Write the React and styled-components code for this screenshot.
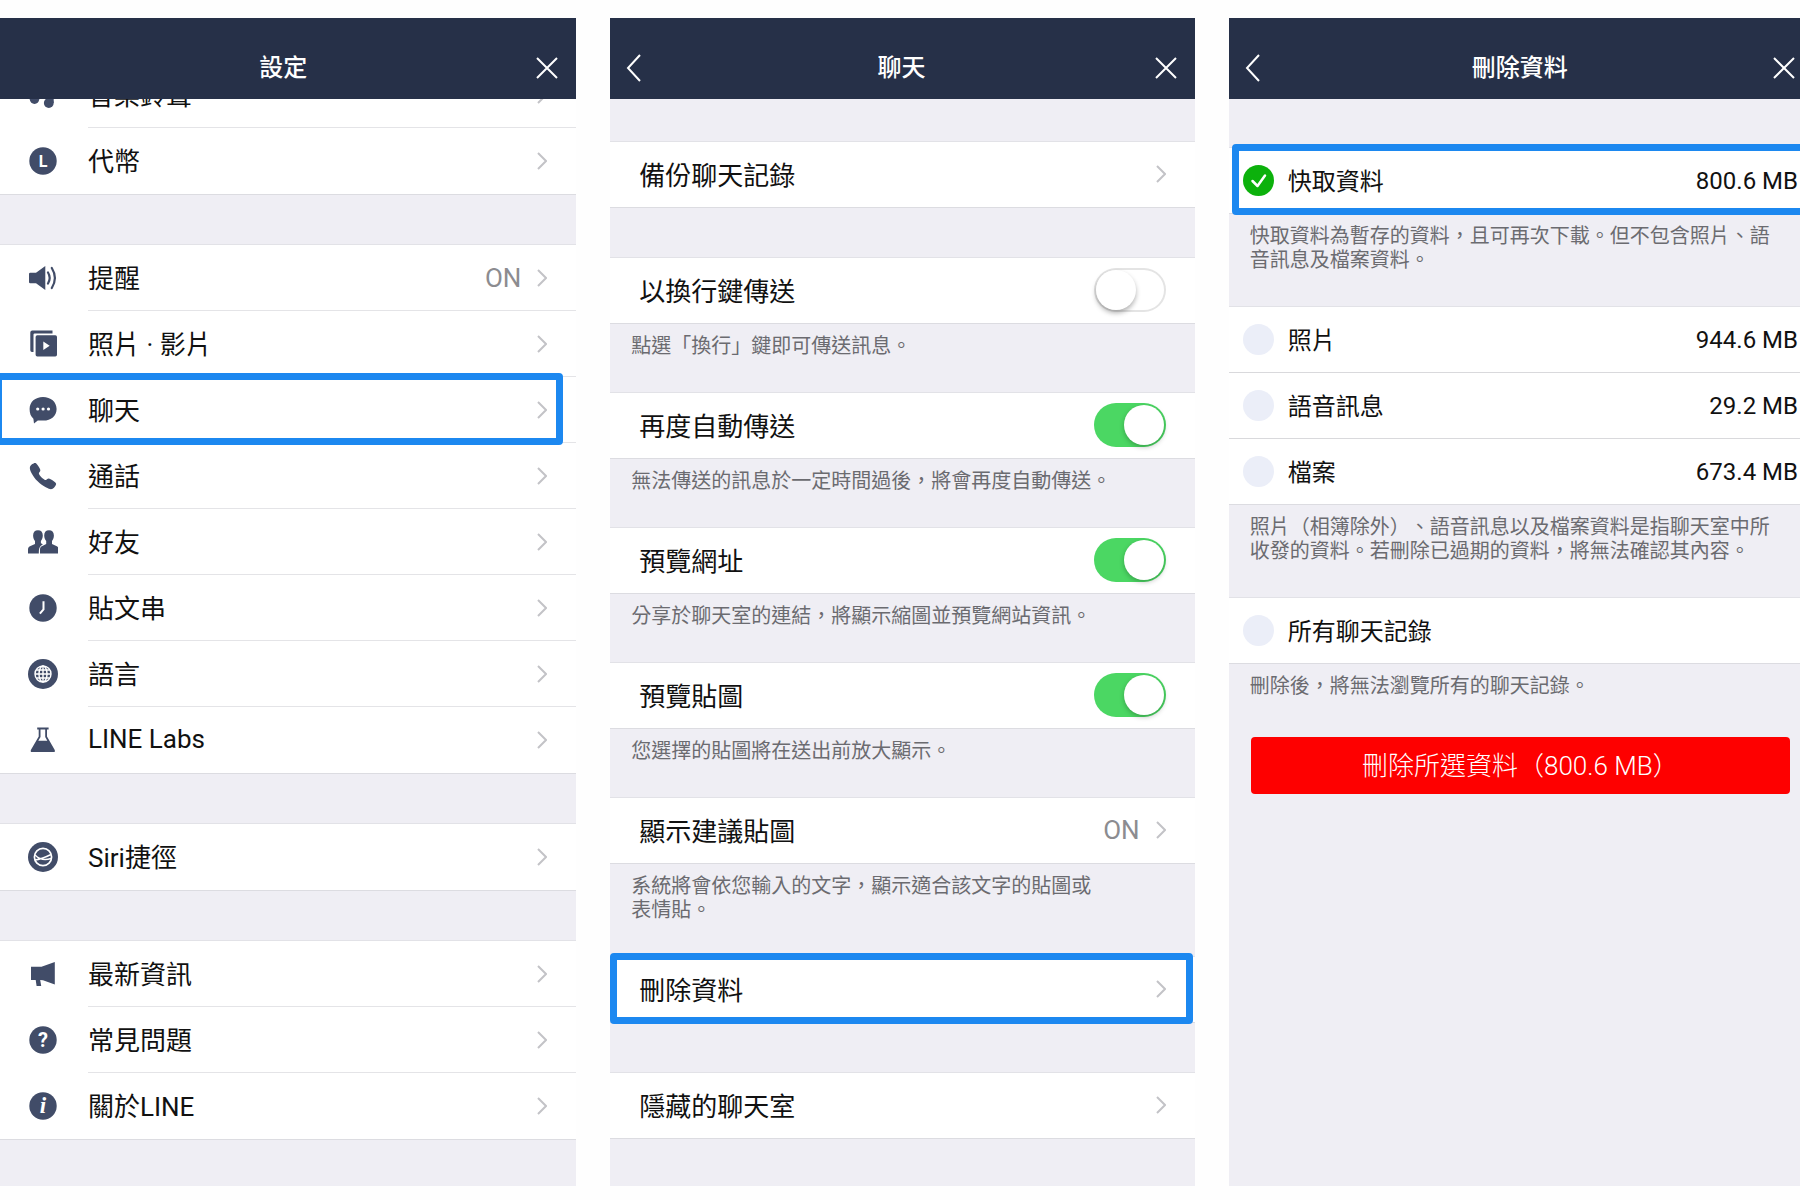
import React from "react";
import styled, { createGlobalStyle } from "styled-components";
import { IoCall } from "react-icons/io5";

const GlobalStyle = createGlobalStyle`
  * {
    box-sizing: border-box;
  }

  body {
    margin: 0;
    background: #fefefe;
    color: #111;
    font-family: Roboto, "Noto Sans CJK TC", sans-serif;
    font-size: 26px;
    text-spacing-trim: space-all;
  }
`;

const Page = styled.main`
  overflow: hidden;
  padding: 18px 0 14px;
`;

const Screens = styled.div`
  display: grid;
  grid-template-columns: repeat(3, minmax(0, 1fr));
  gap: 34px;
  margin: 0 -13px 0 -8px;
`;

const Screen = styled.section`
  display: flex;
  flex-direction: column;
  background: #efeef4;
`;

const Header = styled.header`
  position: relative;
  z-index: 1;
  display: grid;
  grid-template-columns: 1fr auto 1fr;
  align-items: center;
  height: 81px;
  padding: 19px 18px 0 16px;
  background: #263048;
  color: white;
`;

const Title = styled.h1`
  grid-column: 2;
  margin: 0;
  font-size: 24px;
  font-weight: 500;
  line-height: 36px;
`;

const HeaderButton = styled.button`
  grid-column: ${(props) => (props.$side === "left" ? 1 : 3)};
  justify-self: ${(props) => (props.$side === "left" ? "start" : "end")};
  display: flex;
  border: 0;
  padding: 0;
  background: none;
  color: inherit;
`;

const Content = styled.div`
  padding-top: ${(props) => props.$top || 0}px;
  padding-bottom: 47px;
`;

const ScrolledContent = styled(Content)`
  margin-top: -37px;
`;

const Group = styled.div`
  margin-top: ${(props) => props.$space || 0}px;
  background: white;
  box-shadow: 0 -1px 0 #e2e2e7, 0 1px 0 #dcdce1;
`;

const Row = styled.div`
  position: relative;
  display: flex;
  align-items: center;
  height: ${(props) => (props.$tall ? 66 : 65)}px;
  padding-left: ${(props) => (props.$tall ? 36 : 29)}px;
  color: inherit;
  text-decoration: none;
`;

const RowBody = styled.div`
  flex: 1;
  display: flex;
  align-items: center;
  gap: 16px;
  height: 100%;
  padding-right: 29px;
  border-bottom: 1px solid transparent;

  ${Row}:not(:last-child) > & {
    border-color: #e4e4e7;
  }
`;

const RowLabel = styled.span`
  flex: 1;
  padding-bottom: 2px;
  white-space: nowrap;
`;

const RowValue = styled.span`
  color: #8c8c90;
`;

const IconBox = styled.span`
  display: flex;
  align-items: center;
  justify-content: center;
  width: 30px;
  margin-right: 30px;
  color: #414c68;
`;

const Highlight = styled.span`
  position: absolute;
  top: -4px;
  bottom: -2px;
  left: ${(props) => props.$left}px;
  right: ${(props) => props.$right}px;
  z-index: 1;
  border: 7px solid #1c88f0;
  border-radius: 4px;
  pointer-events: none;
`;

const Note = styled.p`
  margin: 0;
  padding: 11px 28px 35px 21px;
  color: #6b6b70;
  font-size: 20px;
  line-height: 24px;
`;

const Switch = styled.input`
  appearance: none;
  flex: none;
  width: 72px;
  height: 44px;
  margin: 0;
  padding: 2px;
  border-radius: 22px;
  background: white;
  box-shadow: inset 0 0 0 2px #e4e4e4;

  &::before {
    content: "";
    display: block;
    width: 40px;
    height: 40px;
    border-radius: 50%;
    background: white;
    box-shadow: 0 3px 5px rgba(0, 0, 0, 0.3);
  }

  &:checked {
    background: #4bd763;
    box-shadow: none;
  }

  &:checked::before {
    margin-left: 28px;
    box-shadow: 0 2px 5px rgba(0, 0, 0, 0.25);
  }
`;

const CheckRow = styled.label`
  position: relative;
  display: flex;
  align-items: center;
  gap: 14px;
  height: 65px;
  padding: 0 15px 0 14px;
  font-size: 24px;

  &:not(:last-child) {
    height: 66px;
    border-bottom: 1px solid #d9d9dc;
  }
`;

const CheckMark = styled.span`
  position: relative;
  display: flex;
  width: 31px;
  height: 31px;

  svg {
    position: absolute;
    inset: 0;
    pointer-events: none;
  }
`;

const CheckInput = styled.input`
  appearance: none;
  width: 31px;
  height: 31px;
  margin: 0;
  border-radius: 50%;
  background: #ebeef8;

  &:checked {
    background: #0cb10c;
  }
`;

const DeleteButton = styled.button`
  display: block;
  width: calc(100% - 45px);
  height: 57px;
  margin: 4px 23px 0 22px;
  padding: 0 0 5px;
  border: 0;
  border-radius: 4px;
  background: #fe0000;
  color: white;
  font-family: inherit;
  font-size: 26px;
  font-weight: 300;
`;

const CloseIcon = () => (
  <svg width="22" height="22" viewBox="0 0 22 22" stroke="currentColor" strokeWidth="2">
    <path d="M1 1l20 20M21 1L1 21" />
  </svg>
);

const BackIcon = () => (
  <svg width="15" height="28" viewBox="0 0 15 28" fill="none" stroke="currentColor" strokeWidth="2">
    <path d="M14 1L2 14l12 13" />
  </svg>
);

const Chevron = () => (
  <svg width="10" height="18" viewBox="0 0 10 18" fill="none" stroke="#c3c3c7" strokeWidth="2">
    <path d="M1 1l8 8-8 8" />
  </svg>
);

const Icon = ({ children }) => (
  <svg width="30" height="30" viewBox="0 0 30 30" fill="currentColor">
    {children}
  </svg>
);

const LetterIcon = ({ letter, ...rest }) => (
  <Icon>
    <circle cx="15" cy="15" r="13.7" />
    <text x="15" y="20.5" textAnchor="middle" fill="white" fontWeight="700" fontSize="16" {...rest}>
      {letter}
    </text>
  </Icon>
);

const icons = {
  music: (
    <Icon>
      <circle cx="6.5" cy="19.3" r="4.7" />
      <circle cx="20.8" cy="23" r="4.9" />
      <path d="M8.5 3l17.2 3v17h-3V11L11.2 9v10h-2.7z" />
    </Icon>
  ),
  coin: <LetterIcon letter="L" />,
  speaker: (
    <Icon>
      <path d="M2.2 9.8H8L17.3 3v24L8 20.2H2.2q-1.2 0-1.2-1.2v-8q0-1.2 1.2-1.2z" />
      <path
        d="M20 9.5q3.4 5.5 0 11M23.8 5q6.2 10 0 20"
        fill="none"
        stroke="currentColor"
        strokeWidth="2.2"
        strokeLinecap="round"
      />
    </Icon>
  ),
  photos: (
    <Icon>
      <path d="M4.3 1.5H24.5v3H6.6q-1.1 0-1.1 1.1V23H4q-1.7 0-1.7-1.7V3.5q0-2 2-2z" />
      <path
        fillRule="evenodd"
        d="M9.3 6.2h18q1.7 0 1.7 1.7v17.9q0 1.7-1.7 1.7h-18q-1.7 0-1.7-1.7V7.9q0-1.7 1.7-1.7zM15.3 12.5v8.6l6.4-4.3z"
      />
    </Icon>
  ),
  chat: (
    <Icon>
      <path d="M15 2C22.8 2 28.6 6.9 28.6 14S23 25.6 15.4 25.6H9.8L6 28.4l-.6-4.6C2.8 21.4 1.6 18.4 1.6 14 1.6 6.9 7.2 2 15 2z" />
      <g fill="white">
        <circle cx="9.7" cy="14" r="1.6" />
        <circle cx="15.1" cy="14" r="1.6" />
        <circle cx="20.5" cy="14" r="1.6" />
      </g>
    </Icon>
  ),
  call: <IoCall size={30} />,
  friends: (
    <Icon>
      <path d="M10 3.3c3 0 4.8 1.9 4.8 5.1 0 2.6-1 4.4-1.9 5.6v2.2l2 1-2 1.6c-1.6 1.2-2.1 3.6-2.1 7.7H0v-4c0-1.8 1-2.8 2.5-3.5L7 17v-3c-1-1.2-1.9-3-1.9-5.6 0-3.2 1.9-5.1 4.9-5.1z" />
      <path d="M21 3.3c3 0 4.9 1.9 4.9 5.1 0 2.6-1 4.4-1.9 5.6v3l4.3 2c1.5.7 2.4 1.7 2.4 3.5v4H12v-4c0-1.8.8-2.8 2.3-3.5l3.9-2v-3c-1-1.2-2-3-2-5.6 0-3.2 1.8-5.1 4.8-5.1z" />
    </Icon>
  ),
  clock: (
    <Icon>
      <circle cx="15" cy="15" r="13.7" />
      <path d="M15.5 8.3v8.2l-3.6 4.2" fill="none" stroke="white" strokeWidth="2" />
    </Icon>
  ),
  globe: (
    <Icon>
      <circle cx="15" cy="15" r="15" />
      <g fill="none" stroke="white" strokeWidth="1.4">
        <circle cx="15" cy="15" r="8" />
        <ellipse cx="15" cy="15" rx="4" ry="8" />
        <path d="M15 7v16M7 15h16M8.3 11h13.4M8.3 19h13.4" />
      </g>
    </Icon>
  ),
  flask: (
    <Icon>
      <path
        fillRule="evenodd"
        d="M9.2 2.5h11.4v2h-1.6v7l7.6 13.2q1 2.3-1 2.3H4q-2 0-1-2.3L10.7 11.5v-7H9.2zM12.5 4.5v7.5l-2.2 3.8h9L17.2 12V4.5z"
      />
    </Icon>
  ),
  siri: (
    <Icon>
      <circle cx="15" cy="15" r="15" />
      <g fill="none" stroke="white" strokeWidth="1.7">
        <circle cx="15" cy="15" r="8.6" />
        <path d="M7 13c4 4 10 5.5 16 3.5M7 18c5-.5 10-2.5 16-5.5" strokeWidth="1.4" />
      </g>
    </Icon>
  ),
  news: (
    <Icon>
      <path d="M3 7.8h10.5L26.8 3v22.5L15 21.3l-2.8-.3 1 6H8.6L7.7 21H3z" />
    </Icon>
  ),
  help: <LetterIcon letter="?" fontSize="20" y="22" />,
  info: (
    <LetterIcon
      letter="i"
      fontFamily="Liberation Serif, serif"
      fontStyle="italic"
      fontSize="23"
      y="22"
    />
  ),
};

const settings = [
  [
    { icon: "music", label: "音樂鈴聲" },
    { icon: "coin", label: "代幣" },
  ],
  [
    { icon: "speaker", label: "提醒", value: "ON" },
    { icon: "photos", label: "照片 · 影片" },
    { icon: "chat", label: "聊天", highlighted: true },
    { icon: "call", label: "通話" },
    { icon: "friends", label: "好友" },
    { icon: "clock", label: "貼文串" },
    { icon: "globe", label: "語言" },
    { icon: "flask", label: "LINE Labs" },
  ],
  [{ icon: "siri", label: "Siri捷徑" }],
  [
    { icon: "news", label: "最新資訊" },
    { icon: "help", label: "常見問題" },
    { icon: "info", label: "關於LINE" },
  ],
];

const chatSwitches = [
  { label: "以換行鍵傳送", note: "點選「換行」鍵即可傳送訊息。", on: false, space: 51 },
  { label: "再度自動傳送", note: "無法傳送的訊息於一定時間過後，將會再度自動傳送。", on: true },
  { label: "預覽網址", note: "分享於聊天室的連結，將顯示縮圖並預覽網站資訊。", on: true },
  { label: "預覽貼圖", note: "您選擇的貼圖將在送出前放大顯示。", on: true },
];

const dataTypes = [
  { label: "照片", size: "944.6 MB" },
  { label: "語音訊息", size: "29.2 MB" },
  { label: "檔案", size: "673.4 MB" },
];

const ScreenHeader = ({ title, back }) => (
  <Header>
    {back && (
      <HeaderButton $side="left" aria-label="返回">
        <BackIcon />
      </HeaderButton>
    )}
    <Title>{title}</Title>
    <HeaderButton $side="right" aria-label="關閉">
      <CloseIcon />
    </HeaderButton>
  </Header>
);

const LinkRow = ({ icon, label, value, children }) => (
  <Row as="a" href="#" $tall={Boolean(icon)}>
    {icon && <IconBox>{icons[icon]}</IconBox>}
    <RowBody>
      <RowLabel>{label}</RowLabel>
      {value && <RowValue>{value}</RowValue>}
      <Chevron />
    </RowBody>
    {children}
  </Row>
);

const DataRow = ({ label, size, checked, children }) => (
  <CheckRow>
    <CheckMark>
      <CheckInput type="checkbox" defaultChecked={checked} />
      {checked && (
        <svg viewBox="0 0 31 31" fill="none" stroke="white" strokeWidth="2.5">
          <path d="M9.5 16l5 5 7.5-10.5" strokeLinecap="round" strokeLinejoin="round" />
        </svg>
      )}
    </CheckMark>
    <RowLabel>{label}</RowLabel>
    {size && <span>{size}</span>}
    {children}
  </CheckRow>
);

const SettingsScreen = () => (
  <Screen>
    <ScreenHeader title="設定" />
    <ScrolledContent>
      {settings.map((rows, index) => (
        <Group key={index} $space={index === 0 ? 0 : 51}>
          {rows.map(({ highlighted, ...row }) => (
            <LinkRow key={row.label} {...row}>
              {highlighted && <Highlight $left={3} $right={13} />}
            </LinkRow>
          ))}
        </Group>
      ))}
    </ScrolledContent>
  </Screen>
);

const ChatScreen = () => (
  <Screen>
    <ScreenHeader title="聊天" back />
    <Content $top={43}>
      <Group>
        <LinkRow label="備份聊天記錄" />
      </Group>
      {chatSwitches.map(({ label, note, on, space }) => (
        <React.Fragment key={label}>
          <Group $space={space}>
            <Row as="label">
              <RowBody>
                <RowLabel>{label}</RowLabel>
                <Switch type="checkbox" role="switch" defaultChecked={on} />
              </RowBody>
            </Row>
          </Group>
          <Note>{note}</Note>
        </React.Fragment>
      ))}
      <Group>
        <LinkRow label="顯示建議貼圖" value="ON" />
      </Group>
      <Note>
        系統將會依您輸入的文字，顯示適合該文字的貼圖或
        <br />
        表情貼。
      </Note>
      <Group>
        <LinkRow label="刪除資料">
          <Highlight $left={0} $right={2} />
        </LinkRow>
      </Group>
      <Group $space={51}>
        <LinkRow label="隱藏的聊天室" />
      </Group>
    </Content>
  </Screen>
);

const DeleteScreen = () => (
  <Screen>
    <ScreenHeader title="刪除資料" back />
    <Content $top={49}>
      <Group>
        <DataRow label="快取資料" size="800.6 MB" checked>
          <Highlight $left={3} $right={0} />
        </DataRow>
      </Group>
      <Note>快取資料為暫存的資料，且可再次下載。但不包含照片、語音訊息及檔案資料。</Note>
      <Group>
        {dataTypes.map((type) => (
          <DataRow key={type.label} {...type} />
        ))}
      </Group>
      <Note>
        照片（相簿除外）、語音訊息以及檔案資料是指聊天室中所收發的資料。若刪除已過期的資料，將無法確認其內容。
      </Note>
      <Group>
        <DataRow label="所有聊天記錄" />
      </Group>
      <Note>刪除後，將無法瀏覽所有的聊天記錄。</Note>
      <DeleteButton>刪除所選資料（800.6 MB）</DeleteButton>
    </Content>
  </Screen>
);

const App = () => {
  return (
    <>
      <GlobalStyle />
      <Page>
        <Screens>
          <SettingsScreen />
          <ChatScreen />
          <DeleteScreen />
        </Screens>
      </Page>
    </>
  );
};

export default App;
